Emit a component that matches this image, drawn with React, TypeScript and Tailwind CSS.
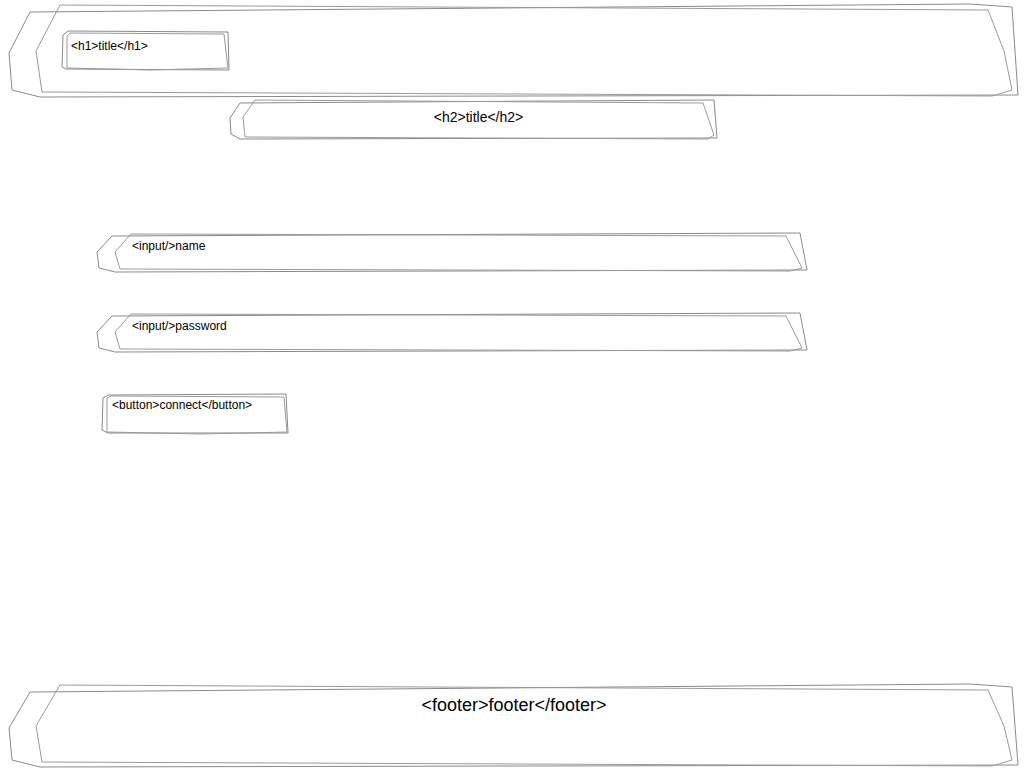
import type { ReactNode } from "react";

type Pt = [number, number];

interface SketchProps {
  w: number;
  h: number;
  shapes: Pt[][];
  className?: string;
  children?: ReactNode;
}

// hand-drawn outline: a couple of loose polygons drawn behind the content
function Sketch({ w, h, shapes, className = "", children }: SketchProps) {
  return (
    <div className={`relative shrink-0 ${className}`} style={{ width: w, height: h }}>
      <svg
        className="pointer-events-none absolute left-0 top-0 overflow-visible"
        width={w}
        height={h}
        viewBox={`0 0 ${w} ${h}`}
        fill="none"
        aria-hidden
      >
        {shapes.map((pts, i) => (
          <polygon
            key={i}
            points={pts.map((p) => p.join(",")).join(" ")}
            stroke={i === 0 ? "#8a8a8a" : "#9a9a9a"}
            strokeWidth={1}
            strokeLinejoin="round"
          />
        ))}
      </svg>
      <div className="relative h-full">{children}</div>
    </div>
  );
}

const bigShapes = (h: number): Pt[][] => [
  [[21, 8], [961, 0], [1003, 3], [1009, h - 2], [31, h], [3, h - 7], [0, Math.round(h / 2) + 2]],
  [[51, 1], [979, 6], [995, Math.round(h / 2)], [1003, h - 7], [983, h - 1], [33, h - 5], [27, Math.round(h / 2)]],
];

const inputShapes: Pt[][] = [
  [[15, 3], [703, 0], [710, 37], [18, 39], [2, 35], [0, 19]],
  [[34, 1], [689, 3], [705, 35], [693, 38], [23, 36], [18, 19]],
];

function Field({ label, className }: { label: string; className: string }) {
  return (
    <Sketch w={710} h={39} shapes={inputShapes} className={`ml-[97px] ${className}`}>
      <div className="pl-[35px] pt-[6px] text-[12px] leading-[14px] text-black">{label}</div>
    </Sketch>
  );
}

export default function App() {
  return (
    <div className="flex min-h-[768px] flex-col bg-white pb-px font-['Liberation_Sans',Arial,sans-serif] text-black">
      <Sketch w={1009} h={93} shapes={bigShapes(93)} className="ml-[9px] mt-[4px]">
        <div className="pl-[53px] pt-[27px]">
          <Sketch
            w={167}
            h={40}
            shapes={[
              [[6, 0], [166, 1], [167, 39], [4, 38], [0, 36], [1, 4]],
              [[8, 2], [162, 3], [166, 37], [88, 39], [5, 37], [5, 5]],
            ]}
          >
            <h1 className="pl-[9px] pt-[8px] text-[12px] font-normal leading-[14px]">{"<h1>title</h1>"}</h1>
          </Sketch>
        </div>
      </Sketch>

      <Sketch
        w={487}
        h={39}
        className="ml-[230px] mt-[3px]"
        shapes={[
          [[10, 3], [484, 0], [487, 38], [10, 39], [1, 34], [0, 18]],
          [[25, 0], [473, 3], [484, 35], [478, 39], [15, 37], [13, 17]],
        ]}
      >
        <h2 className="pl-[10px] pt-[9px] text-center text-[14px] font-normal leading-[16px]">{"<h2>title</h2>"}</h2>
      </Sketch>

      <Field label="<input/>name" className="mt-[94px]" />
      <Field label="<input/>password" className="mt-[41px]" />

      <Sketch
        w={186}
        h={40}
        className="ml-[102px] mt-[42px]"
        shapes={[
          [[6, 1], [184, 0], [186, 39], [6, 39], [0, 36], [1, 4]],
          [[9, 2], [182, 3], [185, 38], [98, 40], [5, 38], [5, 4]],
        ]}
      >
        <button type="button" className="block pl-[10px] pt-[4px] text-left text-[12px] leading-[14px]">
          {"<button>connect</button>"}
        </button>
      </Sketch>

      <footer className="mt-auto">
        <Sketch w={1009} h={83} shapes={bigShapes(83)} className="ml-[9px]">
          <div className="pl-[1px] pt-[10px] text-center text-[18px] leading-[22px]">{"<footer>footer</footer>"}</div>
        </Sketch>
      </footer>
    </div>
  );
}
